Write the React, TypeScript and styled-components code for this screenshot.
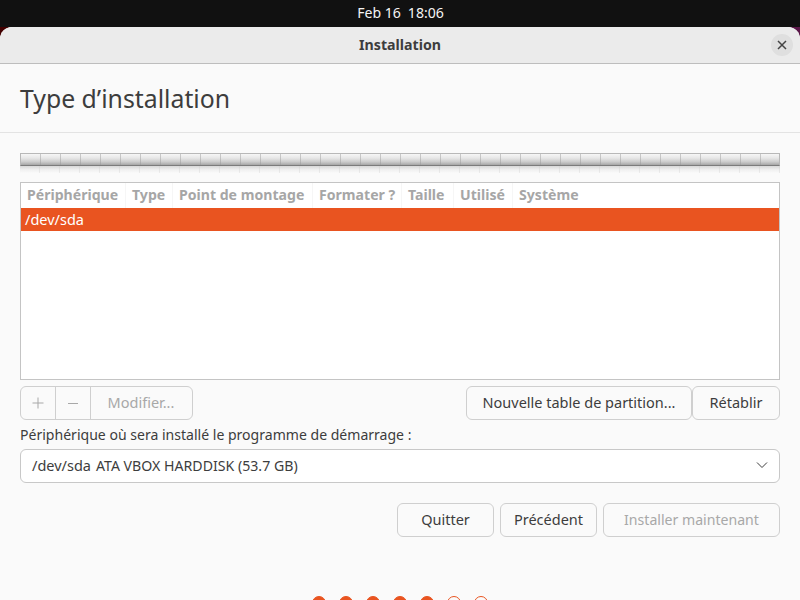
import React from "react";
import styled, { createGlobalStyle } from "styled-components";

const Global = createGlobalStyle`
  html, body { margin: 0; padding: 0; height: 600px; overflow: hidden; background: #111; }
  * { box-sizing: border-box; }
  body { font-family: "Noto Sans", "Open Sans", sans-serif; }
`;

const Screen = styled.div`
  width: 800px; height: 600px; overflow: hidden; display: flex; flex-direction: column;
  background: linear-gradient(90deg, #420000 0%, #420000 50%, #5a1748 50%, #5a1748 100%);
`;
const TopBar = styled.div`
  height: 27px; flex: none; background: #111; color: #f4f4f4; display: flex; align-items: center;
  justify-content: center; gap: 7px; font-size: 14.1px; padding: 0 0 2px 1px;
`;
const Window = styled.div`
  flex: 1; background: #fafafa; border-radius: 12px 12px 0 0; display: flex; flex-direction: column; overflow: hidden;
`;
const TitleBar = styled.div`
  height: 37px; flex: none; background: #ebebeb; border-bottom: 1px solid #bdbdbd; display: grid;
  grid-template-columns: 1fr auto; align-items: center; padding: 0 7px 0 0; position: relative;
`;
const WindowTitle = styled.div`
  position: absolute; left: 0; right: 0; top: 8px; text-align: center; font-weight: 700; font-size: 14.2px; color: #3d3d3d;
`;
const CloseButton = styled.div`
  grid-column: 2; width: 22px; height: 22px; border-radius: 50%; background: #dfdfdf; display: flex;
  align-items: center; justify-content: center;
`;
const Heading = styled.div`
  height: 69px; flex: none; border-bottom: 1px solid #e3e3e3; padding: 0 20px 1px; display: flex; align-items: center;
  font-size: 24.8px; color: #3d3d3d;
`;
const Content = styled.div`
  padding: 20px 20px 0; display: flex; flex-direction: column; flex: 1;
`;
const Bar = styled.div`
  height: 13px; flex: none; border: 1px solid #b8b8b8; border-bottom: 1px solid #7c7c7c;
  background:
    repeating-linear-gradient(90deg, transparent 0 19px, rgba(150,150,150,.45) 19px 20px),
    linear-gradient(180deg, #f6f6f6 0%, #e8e8e8 35%, #cdcdcd 70%, #a6a6a6 100%);
`;
const BarReflection = styled.div`
  height: 7px; flex: none; margin-bottom: 9px;
  background:
    repeating-linear-gradient(90deg, transparent 0 19px, rgba(200,200,200,.3) 19px 20px),
    linear-gradient(180deg, #d8d8d8 0%, #efefef 50%, #fafafa 100%);
`;
const Table = styled.div`
  height: 198px; flex: none; border: 1px solid #c4c4c4; background: #fff; display: flex; flex-direction: column;
`;
const HeaderRow = styled.div`
  height: 25px; flex: none; display: flex;
`;
const HeaderCell = styled.div<{ $w?: number }>`
  ${(p) => (p.$w ? `width: ${p.$w}px;` : "flex: 1;")}
  flex-shrink: 0; padding: 0 0 2px 6px; display: flex; align-items: center; font-size: 14.1px; font-weight: 700;
  color: #a6a6a6; border-right: 1px solid #f6f6f6; white-space: nowrap;
  &:last-child { border-right: 0; }
`;
const SelectedRow = styled.div`
  height: 23px; flex: none; background: #e95420; color: #fff; font-size: 14.5px; display: flex; align-items: center; padding: 0 0 2px 4px;
`;
const Toolbar = styled.div`
  margin-top: 6px; display: flex; justify-content: space-between;
`;
const Segmented = styled.div`
  display: flex; height: 34px; border: 1px solid #cfcfcf; border-radius: 6px; color: #a8a8a8;
`;
const SegIcon = styled.div`
  width: 35px; display: flex; align-items: center; justify-content: center; border-right: 1px solid #cfcfcf;
`;
const SegLabel = styled.div`
  width: 101px; display: flex; align-items: center; justify-content: center; font-size: 14.5px; padding: 0 1px 2px 0;
`;
const ButtonGroup = styled.div<{ $gap: number }>`
  display: flex; gap: ${(p) => p.$gap}px;
`;
const Button = styled.div<{ $w: number; $off?: boolean; $size?: number }>`
  width: ${(p) => p.$w}px; height: 34px; border: 1px solid #cfcfcf; border-radius: 6px; display: flex;
  align-items: center; justify-content: center; font-size: ${(p) => p.$size ?? 14.5}px; white-space: nowrap; padding-bottom: 2px;
  color: ${(p) => (p.$off ? "#a8a8a8" : "#3d3d3d")};
`;
const Label = styled.div`
  height: 29px; display: flex; align-items: center; font-size: 14.05px; color: #3d3d3d; white-space: nowrap;
`;
const Select = styled.div`
  height: 34px; border: 1px solid #c8c8c8; border-radius: 6px; background: #fff; display: flex;
  align-items: center; padding: 0 11px 2px 11px; font-size: 14.15px; color: #3d3d3d;
`;
const DevicePath = styled.span`
  font-size: 14.5px; margin-right: 5px;
`;
const DeviceName = styled.span`
  flex: 1;
`;
const Actions = styled.div`
  margin-top: 20px; display: flex; justify-content: flex-end;
`;
const Dots = styled.div`
  margin-top: 59px; display: flex; justify-content: center; gap: 13px;
`;
const Dot = styled.div<{ $on?: boolean }>`
  width: 14px; height: 14px; flex: none; border-radius: 50%; border: 1px solid #e95420;
  background: ${(p) => (p.$on ? "#e95420" : "transparent")};
`;

const cols: [string, number?][] = [
  ["Périphérique", 105], ["Type", 47], ["Point de montage", 140], ["Formater ?", 89], ["Taille", 52], ["Utilisé", 59], ["Système"],
];

export default function App() {
  return (
    <Screen>
      <Global />
      <TopBar><span>Feb 16</span><span>18:06</span></TopBar>
      <Window>
        <TitleBar>
          <WindowTitle>Installation</WindowTitle>
          <CloseButton>
            <svg width="10" height="10" viewBox="0 0 10 10"><path d="M1 1l8 8M9 1l-8 8" stroke="#444" strokeWidth="1.5" /></svg>
          </CloseButton>
        </TitleBar>
        <Heading>Type d’installation</Heading>
        <Content>
          <Bar />
          <BarReflection />
          <Table>
            <HeaderRow>
              {cols.map(([t, w]) => <HeaderCell key={t} $w={w}>{t}</HeaderCell>)}
            </HeaderRow>
            <SelectedRow>/dev/sda</SelectedRow>
          </Table>
          <Toolbar>
            <Segmented>
              <SegIcon><svg width="12" height="12" viewBox="0 0 12 12"><path d="M6 .5v11M.5 6h11" stroke="#a8a8a8" /></svg></SegIcon>
              <SegIcon><svg width="12" height="12" viewBox="0 0 12 12"><path d="M1 6.5h10" stroke="#a8a8a8" /></svg></SegIcon>
              <SegLabel>Modifier...</SegLabel>
            </Segmented>
            <ButtonGroup $gap={0}>
              <Button $w={226}>Nouvelle table de partition...</Button>
              <Button $w={88}>Rétablir</Button>
            </ButtonGroup>
          </Toolbar>
          <Label>Périphérique où sera installé le programme de démarrage :</Label>
          <Select>
            <DevicePath>/dev/sda</DevicePath>
            <DeviceName>ATA VBOX HARDDISK (53.7 GB)</DeviceName>
            <svg width="12" height="8" viewBox="0 0 12 8"><path d="M1 1.5l5 5 5-5" stroke="#3d3d3d" fill="none" /></svg>
          </Select>
          <Actions>
            <ButtonGroup $gap={6}>
              <Button $w={97}>Quitter</Button>
              <Button $w={97}>Précédent</Button>
              <Button $w={177} $off $size={14.1}>Installer maintenant</Button>
            </ButtonGroup>
          </Actions>
          <Dots>
            {[1, 1, 1, 1, 1, 0, 0].map((on, i) => <Dot key={i} $on={!!on} />)}
          </Dots>
        </Content>
      </Window>
    </Screen>
  );
}
